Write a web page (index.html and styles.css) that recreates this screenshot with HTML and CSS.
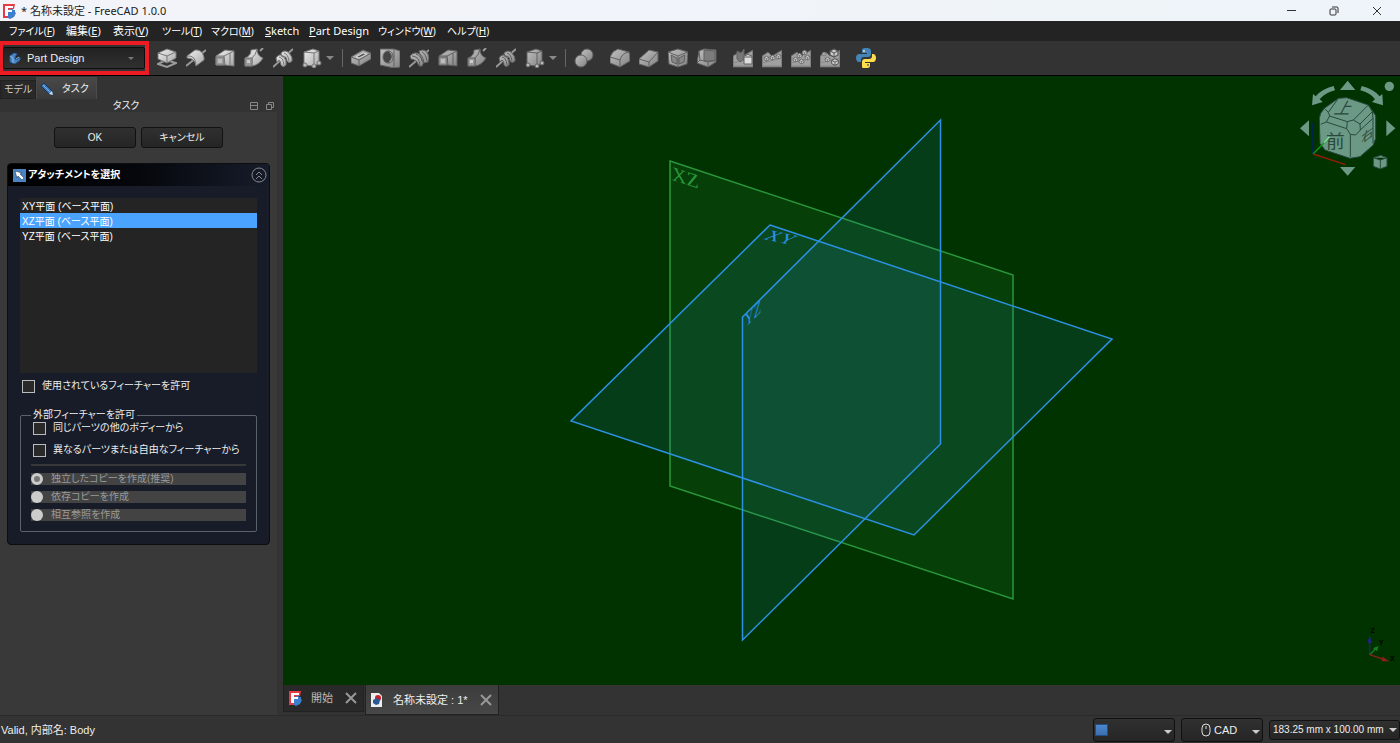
FILE: index.html
```html
<!DOCTYPE html>
<html lang="ja">
<head>
<meta charset="utf-8">
<title>* 名称未設定 - FreeCAD 1.0.0</title>
<link rel="stylesheet" href="styles.css">
</head>
<body>
<svg class="defs" aria-hidden="true">
  <defs>
    <linearGradient id="g" x1="0" y1="0" x2="1" y2="1"><stop offset="0" stop-color="#f2f2f2"/><stop offset="1" stop-color="#a8a8a8"/></linearGradient>
    <linearGradient id="d" x1="0" y1="0" x2="1" y2="1"><stop offset="0" stop-color="#c0c0c0"/><stop offset="1" stop-color="#848484"/></linearGradient>
    <symbol id="fc" viewBox="0 0 14 16"><path d="M1 1h12l-1 5-6 1v8H1z" fill="#e83a42"/><path d="M6 7l3-1 1-1 1 2h2v2l1 1-1 2-1 2-2 1-2 1-2-1z" fill="#3b7fcd"/><path d="M3 3h8v2H6v2h4v2H6v4H3z" fill="#fff"/></symbol>
    <symbol id="loft" viewBox="0 0 20 20"><path d="M1 8l9-6 9 1v15l-9-1H1z"/><path d="M1 8h8l10-5M9 8l1 9M15 5v13" fill="none"/><path d="M1 9h8v8H1z" fill="#999"/><path d="M3 11h4v4H3z" fill="#bbb" stroke="none"/></symbol>
    <symbol id="sweep" viewBox="0 0 20 20"><path d="M1 10Q7 8 7 2l6-1q0 7 6 9-4 7-11 8H1z"/><path d="M8 10q4-3 5-9M8 18q0-4 0-8" fill="none"/><path d="M1 10h7v8H1z" fill="#999"/><path d="M3 12h3v3H3z" fill="#ccc" stroke="none"/><path d="M16 3l3-3" stroke="#999" stroke-width="2"/></symbol>
    <symbol id="helix" viewBox="0 0 20 20"><path d="M0 19L20 1" stroke="#999" stroke-width="2"/><path d="M3 10q3-5 7-2 4 4 3 9-3 3-5 0 0-4-2-5l-2 2zM8 5q4-4 8 0 4 4 3 8-3 3-5 0 0-4-3-5l-2 1z"/><path d="M6 9q4 0 5 8M11 5q4 1 5 8" fill="none"/></symbol>
    <symbol id="prim" viewBox="0 0 20 20"><path d="M2 4l9-3 6 2v13l-6 2-9-1z"/><path d="M2 4l10 1v13M12 5l5-2" fill="none"/><g fill="#bbb"><circle cx="3" cy="17" r="2"/><circle cx="12" cy="18" r="2"/><circle cx="17" cy="15" r="2"/></g></symbol>
    <symbol id="revolve" viewBox="0 0 20 20"><path d="M0 18L20 2" stroke="#999" stroke-width="2"/><path d="M1 8L9 2q7-1 9 7v3l-8 6q-1-8-9-8z"/><path d="M1 8q9-1 9 10" fill="none"/></symbol>
    <symbol id="groove" viewBox="0 0 20 20"><path d="M0 19L20 2" stroke="#999" stroke-width="2"/><path d="M10 3q6-3 9 3 2 4 0 8-4 2-6-1zM1 8q4-5 10-2 6 6 2 12-3 1-4-2-1-4-7-5z"/><path d="M3 8q7 0 8 9M7 6q6 2 7 9M13 4q4 2 5 9" fill="none"/></symbol>
    <symbol id="step" viewBox="0 0 20 20"><path d="M0 8l6-4 4 4 10-6v17H0z" fill="#a0a0a0"/><path d="M0 15l20-5M0 18h20" fill="none" stroke="#888"/></symbol>
    <symbol id="ball" viewBox="0 0 6 6"><path d="M1 2l2-1 2 1v2L3 5 1 4z" fill="#ccc" stroke="#555" stroke-width=".6"/><path d="M1 2l2 1 2-1M3 3v2" fill="none" stroke="#555" stroke-width=".5"/></symbol>
  </defs>
</svg>

<header class="titlebar">
  <svg class="app-logo" viewBox="0 0 14 16" aria-hidden="true"><use href="#fc"/></svg>
  <h1 class="window-title">* 名称未設定 - FreeCAD 1.0.0</h1>
  <div class="window-buttons">
    <button aria-label="最小化"><svg viewBox="0 0 10 10"><path d="M1 4.500h9"/></svg></button>
    <button aria-label="元に戻す"><svg viewBox="0 0 10 10"><rect x="1" y="3" width="6" height="6" rx="1"/><path d="M3 1h5q1 0 1 1v5"/></svg></button>
    <button aria-label="閉じる"><svg viewBox="0 0 10 10"><path d="M1 1l8 8M9 1L1 9"/></svg></button>
  </div>
</header>

<nav class="menubar" aria-label="メニュー">
  <a class="kana" href="#">ファイル(<u>F</u>)</a><a href="#">編集(<u>E</u>)</a><a href="#">表示(<u>V</u>)</a><a class="kana" href="#">ツール(<u>T</u>)</a><a class="kana" href="#">マクロ(<u>M</u>)</a><a href="#"><u>S</u>ketch</a><a href="#"><u>P</u>art Design</a><a class="kana" href="#">ウィンドウ(<u>W</u>)</a><a class="kana" href="#">ヘルプ(<u>H</u>)</a>
</nav>

<div class="toolbar" role="toolbar" aria-label="Part Design">
  <div class="workbench">
    <div class="combo">
      <svg class="combo-icon" viewBox="0 0 12 12" aria-hidden="true"><path d="M1 4l4-3 3 1-2 3v2l2 1 3-3v3l-5 4-5-2z" fill="#4c86c6" stroke="#2a5b94"/><path d="M1 4l3 2v5M7 7l3-2" stroke="#8dbbe8" fill="none"/></svg>
      <select aria-label="ワークベンチ"><option>Part Design</option></select>
      <span class="caret dim"></span>
    </div>
  </div>
  <div class="tools light">
    <button aria-label="パッド"><svg viewBox="0 0 20 20"><path d="M1 16l8-4 10 3-9 4z" fill="none" stroke="#999" stroke-width="2"/><path d="M1 5l9-4 9 3v6l-9 5-9-4z"/><path d="M1 5l9 3 9-4M10 8v7" fill="none"/></svg></button>
    <button aria-label="レボリューション"><svg><use href="#revolve"/></svg></button>
    <button aria-label="加算ロフト"><svg><use href="#loft"/></svg></button>
    <button aria-label="加算パイプ"><svg><use href="#sweep"/></svg></button>
    <button aria-label="加算らせん"><svg><use href="#helix"/></svg></button>
    <button aria-label="加算プリミティブ"><svg><use href="#prim"/></svg></button>
    <button class="drop" aria-label="加算プリミティブの種類"><span class="caret"></span></button>
  </div>
  <span class="divider"></span>
  <div class="tools dark">
    <button aria-label="ポケット"><svg viewBox="0 0 20 20"><path d="M0 9l12-7 8 3v6L8 18l-8-3z"/><path d="M0 9l8 3 12-7M8 12v6" fill="none"/><path d="M5 9l7-4 4 1-8 4z" fill="#555" stroke="#ddd"/></svg></button>
    <button aria-label="ホール"><svg viewBox="0 0 20 20"><path d="M0 1h14l6 2v16l-6 1L0 17z"/><path d="M14 1v19" fill="none"/><ellipse cx="8" cy="9" rx="5" ry="6" fill="#444"/><path d="M8 3q7 5 0 12 5 0 5-6T8 3" fill="#aaa"/></svg></button>
    <button aria-label="グルーブ"><svg><use href="#groove"/></svg></button>
    <button aria-label="減算ロフト"><svg><use href="#loft"/></svg></button>
    <button aria-label="減算パイプ"><svg><use href="#sweep"/></svg></button>
    <button aria-label="減算らせん"><svg><use href="#helix"/></svg></button>
    <button aria-label="減算プリミティブ"><svg><use href="#prim"/></svg></button>
    <button class="drop" aria-label="減算プリミティブの種類"><span class="caret"></span></button>
  </div>
  <span class="divider"></span>
  <div class="tools dark">
    <button aria-label="ブーリアン"><svg viewBox="0 0 20 20"><circle cx="13" cy="7" r="6"/><circle cx="7" cy="13" r="6"/></svg></button>
  </div>
  <div class="tools dark spaced">
    <button aria-label="フィレット"><svg viewBox="0 0 20 20"><path d="M0 9q2-6 8-8l11 3q1 2 1 9l-10 6-10-4z"/><path d="M0 9l10 3q2-7 9-8M10 12v7" fill="none"/></svg></button>
    <button aria-label="面取り"><svg viewBox="0 0 20 20"><path d="M0 11l10-9 9 2v9l-9 6-10-3z"/><path d="M0 11l10 3 9-10M10 14v5" fill="none"/></svg></button>
    <button aria-label="抜き勾配"><svg viewBox="0 0 20 20"><path d="M0 4l10-3 10 3-1 12-9 3-9-3z"/><path d="M0 4l10 4 10-4M10 8v11" fill="none"/><path d="M3 7l6 3v6l-5-2zM17 7l-6 3v6l5-2z" fill="#888"/></svg></button>
    <button aria-label="厚み"><svg viewBox="0 0 20 20"><path d="M2 3l5-2 12 1v12l-8 5-11-4z"/><path d="M7 2l11 1v10l-11 0z" fill="#7c7c7c"/><path d="M2 3l1 9-3 3M3 12l8 2 7-2M11 14v5" fill="none"/></svg></button>
  </div>
  <div class="tools dark spaced">
    <button aria-label="鏡像"><svg viewBox="0 0 20 20"><use href="#step"/><path d="M4 3l4 2 3-4v10l-4 3-3-3z" fill="#777"/><path d="M11 8q4-3 8 0v8H11z" fill="#ddd"/><path d="M11 9h8" fill="none"/></svg></button>
    <button aria-label="直線状パターン"><svg viewBox="0 0 20 20"><use href="#step"/><use href="#ball" x="1" y="7" width="7" height="7"/><use href="#ball" x="7" y="6" width="7" height="7"/><use href="#ball" x="13" y="5" width="7" height="7"/></svg></button>
    <button aria-label="円形状パターン"><svg viewBox="0 0 20 20"><use href="#step"/><use href="#ball" x="1" y="8" width="7" height="7"/><use href="#ball" x="5" y="4" width="7" height="7"/><use href="#ball" x="10" y="1" width="7" height="7"/><use href="#ball" x="13" y="6" width="7" height="7"/><use href="#ball" x="7" y="10" width="7" height="7"/></svg></button>
    <button aria-label="マルチ変換"><svg viewBox="0 0 20 20"><use href="#step"/><use href="#ball" x="8" y="-1" width="12" height="12"/><use href="#ball" x="1" y="3" width="6" height="6"/><use href="#ball" x="4" y="8" width="7" height="7"/><use href="#ball" x="10" y="9" width="10" height="10"/></svg></button>
  </div>
  <div class="tools spaced">
    <button aria-label="Python"><svg class="python" viewBox="0 0 20 20"><path d="M10 0C6 0 6 1 6 3v2h5v1H3C1 6 0 8 0 10s1 4 3 4h2v-2c0-2 1-3 3-3h4c2 0 3-1 3-3V3c0-2-1-3-5-3z" fill="#4584b6"/><path d="M10 20c4 0 4-1 4-3v-2H9v-1h8c2 0 3-2 3-4s-1-4-3-4h-1v2c0 2-1 3-3 3H9c-2 0-3 1-3 3v4c0 2 1 3 4 3z" fill="#ffde4c"/><circle cx="8" cy="3" r="1" fill="#ddd"/><circle cx="12" cy="17" r="1" fill="#666"/></svg></button>
  </div>
</div>

<main class="workspace">
  <aside class="dock">
    <div class="dock-tabs" role="tablist">
      <button role="tab" aria-selected="false">モデル</button>
      <button role="tab" aria-selected="true"><svg viewBox="0 0 14 14" aria-hidden="true"><path d="M1 4l3-3 8 8 1 4-4-1z" fill="#3f79bd" stroke="#16385f"/><path d="M3 3l7 7" stroke="#81b1e5"/><path d="M9 12l4 1-1-4z" fill="#ddd"/></svg>タスク</button>
    </div>
    <div class="dock-title">
      <h2>タスク</h2>
      <button aria-label="折りたたむ"><svg viewBox="0 0 8 8"><path d="M.5.500h7v7h-7zM.5 3.500h7"/></svg></button>
      <button aria-label="フロート"><svg viewBox="0 0 8 8"><path d="M.5 2.500h5v5h-5zM2.500 2.500v-2h5v5h-2"/></svg></button>
    </div>
    <form class="dock-body">
      <div class="dialog-buttons"><button type="button">OK</button><button type="button">キャンセル</button></div>
      <section class="task-box">
        <header class="task-head">
          <svg viewBox="0 0 13 13" aria-hidden="true"><path d="M0 0h13v13H0z" fill="#4a83c3"/><path d="M2 2l7 2-2 1 4 4-2 2-4-4-1 2z" fill="#fff" stroke="#142c4b" stroke-width=".5"/></svg>
          <h3>アタッチメントを選択</h3>
          <button type="button" aria-label="閉じる"><svg viewBox="0 0 16 16"><circle cx="8" cy="8" r="7"/><path d="M5 8l3-3 3 3M5 12l3-3 3 3"/></svg></button>
        </header>
        <div class="task-content">
          <select class="plane-list" size="4" aria-label="アタッチメント">
            <option>XY平面 (ベース平面)</option><option selected>XZ平面 (ベース平面)</option><option>YZ平面 (ベース平面)</option>
          </select>
          <label class="check"><input type="checkbox">使用されているフィーチャーを許可</label>
          <fieldset class="external">
            <legend>外部フィーチャーを許可</legend>
            <label class="check"><input type="checkbox">同じパーツの他のボディーから</label>
            <label class="check"><input type="checkbox">異なるパーツまたは自由なフィーチャーから</label>
            <hr>
            <label class="radio"><input type="radio" name="copy" checked disabled>独立したコピーを作成(推奨)</label>
            <label class="radio"><input type="radio" name="copy" disabled>依存コピーを作成</label>
            <label class="radio"><input type="radio" name="copy" disabled>相互参照を作成</label>
          </fieldset>
        </div>
      </section>
    </form>
  </aside>

  <div class="document">
    <div class="viewport">
      <svg class="scene" viewBox="283 76 1117 609" role="img" aria-label="基準平面">
        <path class="plane-green" d="M670 161L1013 275V599L670 486z"/>
        <path class="plane-blue" d="M770 225L1112 339 914 535 571 421z"/>
        <path class="plane-blue" d="M940.500 120V444L742.500 640V317z"/>
        <text class="label-green" transform="translate(672 180) skewY(18)">XZ</text>
        <text class="label-blue" transform="matrix(.95 .2 -.62 .66 763 239)">XY</text>
        <text class="label-blue" transform="matrix(.6 -.6 0 .95 745 328)">YZ</text>
      </svg>
      <svg class="navcube" viewBox="0 3 330 327" role="img" aria-label="ナビゲーションキューブ">
        <g fill="#6b9985"><path d="M173 17l23 28h-46zM173 302l-23-26h46zM30 160l27-24v48zM316 160l-27-24v48z"/><circle cx="298" cy="34" r="14"/>
        <path d="M131 33l4 13q-30 7-46 27l9 8-32 10 3-34 8 7q18-22 54-31zM215 33l-4 13q30 7 44 27l-9 8 33 10-2-34-8 7q-18-22-54-31z"/></g>
        <g class="cube"><path d="M145 70l25-2 65 22 22 32v68l-7 20-40 35-30 5-75-25-15-20-2-75 4-15 11-15z"/><path d="M145 70l-30 42 4 11 53 17 18-5 45-45M115 112l-12-12M119 123l-10 18-17 7M109 141l61 20 11 17v68M172 140l-2 21M190 135l20 12 1 18-14 15-16-2M210 147l37-37M211 165l38-35M247 110l-12-20M247 110l2 20v75"/><path d="M250 248l22-7 19 7v26l-20 8-21-8zM250 248l21 7 20-7M271 255v27"/></g>
        <g class="cube-text"><text x="108" y="220" font-size="56">前</text><text transform="translate(130 116) skewX(-28)" font-size="48">上</text><text transform="translate(214 208) skewY(-38)" font-size="36">右</text></g>
        <g fill="none" stroke-width="4"><path d="M69 237v-92" stroke="#041c70"/><path d="M69 237l45-46" stroke="#0a9b13"/><path d="M102 203l16-17" stroke="#83e39a"/><path d="M69 237l98 32" stroke="#951d08"/></g>
      </svg>
      <svg class="axes" viewBox="0 0 120 120" role="img" aria-label="座標軸">
        <g fill="none" stroke-width="4"><path d="M29 83V42" stroke="#1f237d"/><path d="M29 83l20-20" stroke="#197d20"/><path d="M29 83l45 15" stroke="#8b2118"/></g><path d="M29 24l7 24H22z" fill="#1f237d"/><path d="M56 57l-5 16-12-9z" fill="#197d20"/><path d="M88 103l-24 0 4-14z" fill="#8b2118"/>
        <g class="axis-text"><text x="32" y="17">Z</text><text x="57" y="54">Y</text><text x="90" y="101">X</text></g>
      </svg>
    </div>
    <div class="doc-tabs">
      <div class="doc-tab"><button class="doc-name"><svg viewBox="0 0 14 16" aria-hidden="true"><use href="#fc"/></svg>開始</button><button class="close" aria-label="開始を閉じる"><svg viewBox="0 0 12 12"><path d="M1 1l10 10M11 1L1 11"/></svg></button></div>
      <div class="doc-tab active"><button class="doc-name"><svg viewBox="0 0 14 16" aria-hidden="true"><path d="M1 1h8l3 3v11H1z" fill="#eee"/><circle cx="8" cy="6" r="3" fill="#c7202b"/><path d="M3 8l4-2 3 2-1 4-3 1-3-2z" fill="#2c5795"/></svg>名称未設定 : 1*</button><button class="close" aria-label="名称未設定を閉じる"><svg viewBox="0 0 12 12"><path d="M1 1l10 10M11 1L1 11"/></svg></button></div>
    </div>
  </div>
</main>

<footer class="statusbar">
  <p>Valid, 内部名: Body</p>
  <button class="status-button" aria-label="通知"><span class="blue-square"></span><span class="caret pale"></span></button>
  <button class="status-button"><span class="style-name"><svg viewBox="0 0 10 14" aria-hidden="true"><rect x="1" y="1" width="8" height="12" rx="4"/><path d="M5 3v3"/></svg>CAD</span><span class="caret pale"></span></button>
  <button class="status-button size"><span>183.25 mm x 100.00 mm</span><span class="caret pale"></span></button>
</footer>
</body>
</html>
```

FILE: styles.css
```css
* { box-sizing: border-box; }

body {
  margin: 0;
  min-height: 100vh;
  display: flex;
  flex-direction: column;
  background: #333;
  color: #eee;
  font: 11px/14px "Liberation Sans", "Noto Sans CJK JP", sans-serif;
  font-feature-settings: "palt";
}

h1, h2, h3, p { margin: 0; font: inherit; }
button, select, input { font: inherit; font-feature-settings: inherit; color: inherit; }
button { border: 0; padding: 0; background: none; }
svg { display: block; }
.defs { position: absolute; width: 0; height: 0; }

.caret {
  width: 0;
  height: 0;
  border: 4px solid transparent;
  border-top-color: #888;
  border-bottom: 0;
}
.caret.dim { border-width: 3px 3px 0; border-top-color: #777; }
.caret.pale { border-top-color: #ccc; }

/* window frame */
.titlebar {
  height: 21px;
  display: flex;
  align-items: center;
  gap: 5px;
  padding-left: 2px;
  background: linear-gradient(90deg, #f3f4fa, #eef4f9);
  color: #222;
}
.app-logo { width: 14px; height: 16px; }
.window-title { flex: 1; font: 11px/16px "Noto Sans", "Noto Sans CJK JP", sans-serif; }
.window-buttons { display: flex; padding-right: 2px; }
.window-buttons button { width: 43px; height: 20px; display: grid; place-items: center; }
.window-buttons svg { width: 10px; height: 10px; fill: none; stroke: #333; }

.menubar {
  height: 20px;
  display: grid;
  grid-template-columns: 57px 47px 49px 49px 54px 44px 69px 69px 50px;
  align-items: center;
  padding-left: 9px;
  background: #232323;
  font-family: "Noto Sans", "Noto Sans CJK JP", sans-serif;
  white-space: nowrap;
}
.menubar a { color: #fff; text-decoration: none; }
.menubar .kana { font-size: 10px; }

/* toolbar */
.toolbar {
  height: 35px;
  display: flex;
  align-items: center;
  border-bottom: 1px solid #000;
  background: #333;
}
.workbench {
  width: 149px;
  height: 34px;
  margin-right: 3px;
  padding: 2px 0;
  border: 4px solid #ed1c24;
  border-left-width: 3px;
}
.combo {
  height: 22px;
  display: flex;
  align-items: center;
  padding: 0 10px 0 5px;
  border: 1px solid #0c0c0c;
  border-radius: 2px;
  background: linear-gradient(#222, #303030);
}
.combo-icon { width: 12px; height: 12px; }
.combo select { flex: 1; appearance: none; border: 0; padding: 0 6px; background: none; }
.tools { display: flex; align-items: center; }
.tools button { width: 29px; height: 28px; display: grid; place-items: center; }
.tools svg { width: 20px; height: 20px; stroke: #777; stroke-width: 1; }
.tools svg.python { stroke: none; }
.light svg { fill: url(#g); }
.dark svg { fill: url(#d); stroke: #606060; }
.tools .drop { width: 8px; }
.divider { width: 1px; height: 18px; margin: 0 3px 0 8px; background: #666; }
.spaced { margin-left: 7px; }

/* task dock */
.workspace { flex: 1; display: flex; }
.dock { width: 283px; display: flex; flex-direction: column; background: #333; }
.dock-tabs { height: 23px; display: flex; align-items: flex-end; }
.dock-tabs button {
  width: 36px;
  height: 19px;
  padding: 0 3px;
  border: 1px solid #222;
  background: #292929;
  font-size: 10px;
  color: #ccc;
  white-space: nowrap;
}
.dock-tabs [aria-selected="true"] {
  width: 61px;
  height: 22px;
  display: flex;
  align-items: center;
  gap: 8px;
  border: 1px solid #4a4a4a;
  border-bottom: 0;
  background: linear-gradient(#484848, #3a3a3a);
  color: #eee;
}
.dock-tabs svg { width: 14px; height: 14px; }
.dock-title { display: flex; align-items: center; gap: 8px; height: 13px; padding-right: 9px; font-size: 10px; }
.dock-title h2 { flex: 1; padding-left: 10px; text-align: center; }
.dock-title svg { width: 8px; height: 8px; fill: none; stroke: #888; }
.dock-body { flex: 1; margin-right: 6px; padding: 15px 7px 0; background: #393939; font-size: 10px; }
.dialog-buttons { display: flex; justify-content: center; gap: 5px; }
.dialog-buttons button {
  width: 82px;
  height: 21px;
  border: 1px solid #111;
  border-radius: 3px;
  background: linear-gradient(#303030, #252525);
}
.task-box { margin-top: 15px; border: 1px solid #0b0d10; border-radius: 4px; background: #171c28; overflow: hidden; }
.task-head { height: 22px; display: flex; align-items: center; gap: 2px; padding: 0 2px 0 5px; background: linear-gradient(90deg, #000, #05070c 50%, #171c2a); }
.task-head h3 { flex: 1; font-weight: bold; color: #fff; }
.task-head svg { width: 13px; height: 13px; }
.task-head button svg { width: 16px; height: 16px; fill: none; stroke: #888; stroke-width: 1; }
.task-content { padding: 12px; }
.plane-list {
  width: 100%;
  height: 175px;
  display: block;
  padding: 0;
  border: 0;
  outline: 0;
  border-radius: 0;
  background: #242424;
  overflow: hidden;
}
.plane-list option { height: 15px; min-height: 15px; padding: 0 2px; line-height: 14px; color: #fff; }
.plane-list option:checked { background: #4aa3ff linear-gradient(#4aa3ff, #4aa3ff); color: #fff; }
.check { display: flex; align-items: center; gap: 7px; height: 22px; white-space: nowrap; }
.check input { appearance: none; flex: none; width: 13px; height: 13px; margin: 0; border: 1px solid #bbb; background: #292929; }
.task-content > .check { margin-top: 2px; padding-left: 2px; }
.external { min-width: 0; margin: 12px 0 0; padding: 0 10px 10px; border: 1px solid #5c606a; border-radius: 2px; }
.external legend { height: 12px; margin: 0 0 -4px 0; padding: 0 2px; line-height: 12px; }
.external .check { padding-left: 2px; }
.external hr { margin: 3px 0 7px; border: 0; height: 2px; background: #383838; }
.radio { height: 12px; display: flex; align-items: center; gap: 8px; margin-bottom: 6px; background: #434343; color: #999; }
.radio:last-child { margin-bottom: 0; }
.radio input { appearance: none; width: 12px; height: 12px; margin: 0; border-radius: 50%; background: #ccc; }
.radio input:checked { border: 3px solid #ccc; background: #777; }

/* 3D view */
.document { flex: 1; min-width: 0; display: flex; flex-direction: column; }
.viewport { position: relative; flex: 1; background: #030; overflow: hidden; }
.scene { width: 100%; height: 100%; position: absolute; inset: 0; }
.plane-green { fill: rgba(60, 180, 75, .1); stroke: #2a963b; stroke-width: 1.5; }
.plane-blue { fill: rgba(51, 153, 235, .1); stroke: #2c90e4; stroke-width: 1.5; }
.scene text { font: 20px "Liberation Serif", serif; }
.scene .label-green { fill: #2a963b; }
.scene .label-blue { fill: #2c90e4; }
.navcube { position: absolute; top: 0; right: 0; width: 110px; height: 109px; }
.cube { fill: #6b9985; stroke: #29493c; stroke-width: 3; }
.cube path:nth-child(2) { fill: none; }
.cube-text { fill: #29493c; font-family: "Noto Sans CJK JP", sans-serif; }
.axes { position: absolute; right: 0; bottom: 18px; width: 40px; height: 40px; }
.axis-text { font: bold 20px "Liberation Sans", sans-serif; fill: #000; }
.doc-tabs { display: flex; align-items: flex-start; gap: 1px; height: 30px; }
.doc-tab { display: flex; align-items: center; height: 27px; padding: 0 6px 0 4px; gap: 12px; border: 1px solid #222; border-top: 0; background: #292929; color: #bbb; }
.doc-tab.active { height: 30px; background: linear-gradient(#3c3c3c, #474747); color: #eee; }
.doc-name { display: flex; align-items: center; gap: 9px; }
.doc-name svg { width: 14px; height: 16px; }
.close svg { width: 12px; height: 12px; fill: none; stroke: #999; stroke-width: 2; }

/* status bar */
.statusbar { height: 28px; display: flex; align-items: center; gap: 6px; padding-left: 1px; border-top: 1px solid #2a2a2a; }
.statusbar p { flex: 1; }
.status-button {
  width: 82px;
  height: 24px;
  display: flex;
  align-items: center;
  justify-content: space-between;
  padding: 0 2px 0 1px;
  border: 1px solid #111;
  border-radius: 3px;
  background: linear-gradient(#303030, #252525);
}
.status-button .caret { margin-top: 4px; }
.status-button.size { width: 131px; height: 20px; white-space: nowrap; padding-left: 3px; font-size: 10px; }
.status-button.size .caret { margin: 0; }
.blue-square { width: 13px; height: 12px; border: 1px solid #234e83; background: linear-gradient(#4b87cc, #3a6fb0); }
.style-name { display: flex; align-items: center; gap: 3px; padding-left: 18px; }
.style-name svg { width: 10px; height: 14px; fill: none; stroke: #ddd; }
```
